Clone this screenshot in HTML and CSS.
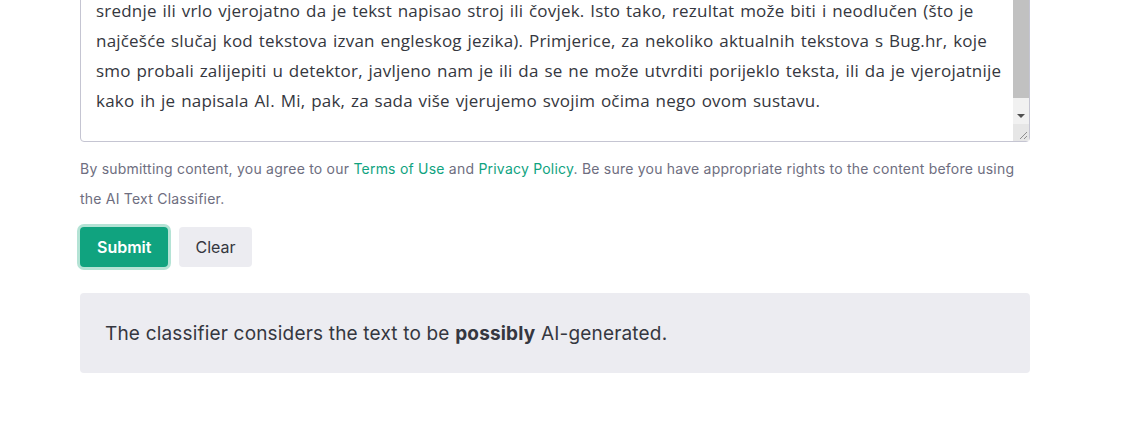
FILE: index.html
```html
<!DOCTYPE html>
<html lang="en">

<head>
  <meta charset="UTF-8">
  <meta name="viewport" content="width=device-width, initial-scale=1.0">
  <title>AI Text Classifier</title>
  <link rel="stylesheet" href="styles.css">
</head>

<body>
  <main class="classifier">
    <div class="textbox">
      <div class="textbox__text">
        <div class="textbox__line">srednje ili vrlo vjerojatno da je tekst napisao stroj ili čovjek. Isto tako, rezultat može biti i neodlučen (što je</div>
        <div class="textbox__line">najčešće slučaj kod tekstova izvan engleskog jezika). Primjerice, za nekoliko aktualnih tekstova s Bug.hr, koje</div>
        <div class="textbox__line">smo probali zalijepiti u detektor, javljeno nam je ili da se ne može utvrditi porijeklo teksta, ili da je vjerojatnije</div>
        <div class="textbox__line">kako ih je napisala AI. Mi, pak, za sada više vjerujemo svojim očima nego ovom sustavu.</div>
      </div>
      <div class="scrollbar">
        <div class="scrollbar__thumb"></div>
        <div class="scrollbar__track"></div>
        <div class="scrollbar__arrow"></div>
        <div class="scrollbar__corner">
          <svg width="16" height="17" viewBox="0 0 16 17">
            <path d="M7 15 L14 8 M11 15 L14 12" stroke="#8e8e8e" stroke-width="1" fill="none" />
          </svg>
        </div>
      </div>
    </div>

    <p class="terms">By submitting content, you agree to our <a href="#">Terms of Use</a> and <a href="#">Privacy Policy</a>. Be sure you have appropriate rights to the content before using the AI Text Classifier.</p>

    <div class="actions">
      <button class="btn btn--primary" type="submit">Submit</button>
      <button class="btn btn--secondary" type="reset">Clear</button>
    </div>

    <div class="result">
      <p class="result__text">The classifier considers the text to be <strong>possibly</strong> AI-generated.</p>
    </div>
  </main>
</body>

</html>
```

FILE: styles.css
```css
body {
  margin: 0;
  background: #fff;
  font-family: Inter, "Liberation Sans", sans-serif;
  color: #353740;
}

.classifier {
  width: 950px;
  margin-left: 80px;
}

.textbox {
  display: flex;
  margin-top: -5px;
  border: 1px solid #c5c5d2;
  border-radius: 4px;
  background: #fff;
}

.textbox__text {
  flex: 1;
  min-width: 0;
  overflow: hidden;
  padding: 0 15px 25px;
  font-family: "Open Sans", "Noto Sans", sans-serif;
  font-size: 17px;
  letter-spacing: 0.2px;
  word-spacing: 1.2px;
  line-height: 30px;
  color: #353740;
}

.textbox__line {
  white-space: nowrap;
}

.scrollbar {
  display: flex;
  flex-direction: column;
  flex-shrink: 0;
  width: 16px;
  background: #f1f1f1;
}

.scrollbar__thumb {
  height: 102px;
  background: #c1c1c1;
}

.scrollbar__track {
  height: 9px;
}

.scrollbar__arrow {
  height: 17px;
  display: flex;
  align-items: center;
  justify-content: center;
}

.scrollbar__arrow::before {
  content: "";
  border-left: 4px solid transparent;
  border-right: 4px solid transparent;
  border-top: 4px solid #505050;
}

.scrollbar__corner {
  flex: 1;
  background: #e6e6e6;
  border-bottom-right-radius: 3px;
}

.scrollbar__corner svg {
  display: block;
}

.terms {
  margin: 12px 0 0;
  font-size: 14px;
  letter-spacing: 0.22px;
  line-height: 30px;
  color: #6e6e80;
}

.terms a {
  color: #10a37f;
  text-decoration: none;
}

.actions {
  display: flex;
  gap: 11px;
  margin-top: 13px;
}

.btn {
  height: 40px;
  border: none;
  border-radius: 4px;
  font-family: Inter, "Liberation Sans", sans-serif;
  font-size: 16px;
  padding: 0 17px;
  cursor: pointer;
}

.btn--primary {
  background: #10a37f;
  color: #fff;
  font-weight: 600;
  box-shadow: 0 0 0 3px #b4e3d5;
}

.btn--secondary {
  background: #ececf1;
  color: #353740;
  padding: 0 16px;
}

.result {
  margin-top: 26px;
  height: 80px;
  display: flex;
  align-items: center;
  padding: 0 25px;
  background: #ececf1;
  border-radius: 4px;
  box-sizing: border-box;
}

.result__text {
  margin: 0;
  font-family: Inter, sans-serif;
  font-size: 19px;
  letter-spacing: 0.18px;
  color: #353740;
}

.result__text strong {
  font-weight: 700;
}
```
